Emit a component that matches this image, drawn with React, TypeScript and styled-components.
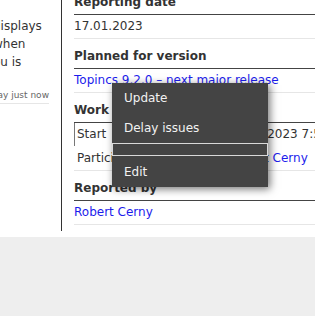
import React from "react";
import styled, { createGlobalStyle } from "styled-components";

const Global = createGlobalStyle`
  html, body { margin: 0; padding: 0; background: #eeeeee; }
  body {
    font-family: "DejaVu Sans", Verdana, sans-serif;
    font-size: 12px;
    color: #333333;
    overflow: hidden;
  }
  * { box-sizing: border-box; }
`;

const Page = styled.div`
  position: relative;
  height: 316px;
  overflow: hidden;
`;

const Main = styled.div`
  display: flex;
  align-items: stretch;
  margin-top: -15px;
  padding-bottom: 6px;
  background: #ffffff;
`;

const Sidebar = styled.aside`
  flex: none;
  width: 62px;
  padding-right: 12px;
  border-right: 1px solid #333333;
  overflow: hidden;
`;

const SideInner = styled.div`
  margin-left: -7px;
  padding-top: 32px;
`;

const SideLine = styled.span`
  display: block;
  line-height: 18px;
  white-space: nowrap;
`;

const SideMeta = styled.div`
  display: flex;
  justify-content: flex-end;
  margin-top: 18px;
  padding-bottom: 1px;
  font-size: 9px;
  line-height: 13px;
  color: #666666;
  white-space: nowrap;
  border-bottom: 1px solid #e6e6e6;
`;

const Content = styled.main`
  flex: 1;
  min-width: 0;
  padding: 0 0 6px 12px;
`;

const FieldLabel = styled.div`
  padding: 10px 0 5px;
  line-height: 14px;
  font-weight: bold;
  white-space: nowrap;
  border-bottom: 1px solid #444444;
`;

const FieldValue = styled.div`
  padding: 4px 0 5px;
  line-height: 14px;
  white-space: nowrap;
  border-bottom: 1px solid #e6e6e6;
`;

const Link = styled.a`
  color: #1c1cec;
  text-decoration: none;
`;

const WorkTable = styled.div`
  display: grid;
  grid-template-columns: 152px auto;
  row-gap: 1px;
  border-bottom: 1px solid #e6e6e6;
`;

const Cell = styled.div<{ $selected?: boolean }>`
  padding: 4px 3px 5px;
  padding-left: ${(p) => (p.$selected ? "2px" : "3px")};
  line-height: 14px;
  white-space: nowrap;
  border-left: ${(p) => (p.$selected ? "1px solid #777777" : "none")};
`;

const Menu = styled.ul`
  position: absolute;
  left: 112px;
  top: 83px;
  width: 156px;
  margin: 0;
  padding: 0;
  list-style: none;
  background: #444444;
  color: #f2f2f2;
  box-shadow: 2px 2px 8px rgba(0, 0, 0, 0.55);
`;

const MenuItem = styled.li<{ $last?: boolean }>`
  padding: ${(p) => (p.$last ? "9px 12px 8px" : "8px 12px")};
  line-height: 14px;
  white-space: nowrap;
`;

const MenuField = styled.li`
  height: 13px;
  border: 1px solid #d9d9d9;
`;

export default function App() {
  return (
    <>
      <Global />
      <Page>
        <Main>
          <Sidebar>
            <SideInner>
              <SideLine>displays</SideLine>
              <SideLine>when</SideLine>
              <SideLine>ou is</SideLine>
              <SideMeta>
                <span>Modified today just now</span>
              </SideMeta>
            </SideInner>
          </Sidebar>
          <Content>
            <FieldLabel>Reporting date</FieldLabel>
            <FieldValue>17.01.2023</FieldValue>
            <FieldLabel>Planned for version</FieldLabel>
            <FieldValue>
              <Link href="#">Topincs 9.2.0 – next major release</Link>
            </FieldValue>
            <FieldLabel>Work</FieldLabel>
            <WorkTable>
              <Cell $selected>Start</Cell>
              <Cell>17.01.2023 7:58</Cell>
              <Cell>Participant</Cell>
              <Cell>
                <Link href="#">Robert Cerny</Link>
              </Cell>
            </WorkTable>
            <FieldLabel>Reported by</FieldLabel>
            <FieldValue>
              <Link href="#">Robert Cerny</Link>
            </FieldValue>
          </Content>
        </Main>
        <Menu>
          <MenuItem>Update</MenuItem>
          <MenuItem>Delay issues</MenuItem>
          <MenuField />
          <MenuItem $last>Edit</MenuItem>
        </Menu>
      </Page>
    </>
  );
}
